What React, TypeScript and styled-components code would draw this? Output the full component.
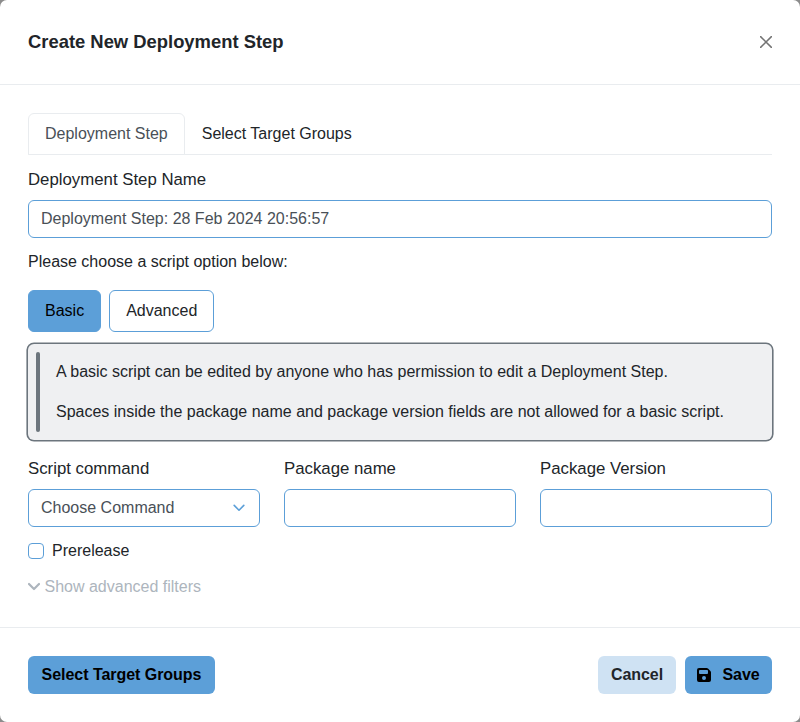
import React from "react";
import styled, { createGlobalStyle } from "styled-components";

const GlobalStyle = createGlobalStyle`
  *, *::before, *::after { box-sizing: border-box; }
  body {
    margin: 0;
    background: #8c8c8c;
    color: #212529;
    font: 16px/24px "Liberation Sans", Arial, sans-serif;
  }
  button, input { font: inherit; }
`;

const Modal = styled.div`
  display: flex;
  flex-direction: column;
  height: 722px;
  background: #fff;
  border-radius: 7px;
`;

const Header = styled.header`
  display: flex;
  align-items: center;
  justify-content: space-between;
  height: 85px;
  padding: 0 28px;
  border-bottom: 1px solid #e9ecef;
`;

const Title = styled.h5`
  margin: 0;
  font-size: 18.4px;
  font-weight: 700;
`;

const CloseButton = styled.button`
  display: flex;
  padding: 0;
  border: 0;
  background: none;
  color: #747474;
`;

const Body = styled.main`
  flex: 1;
  padding: 28px 28px 0;
`;

const Tabs = styled.nav`
  display: flex;
  height: 42px;
  border-bottom: 1px solid #e9ecef;
`;

const Tab = styled.button<{ $active?: boolean }>`
  height: 42px;
  padding: 0 16px;
  border: 1px solid ${(p) => (p.$active ? "#e9ecef" : "transparent")};
  border-bottom-color: ${(p) => (p.$active ? "#fff" : "transparent")};
  border-bottom-color: #e9ecef;
  border-radius: 6px 6px 0 0;
  background: ${(p) => (p.$active ? "#fff" : "none")};
  color: ${(p) => (p.$active ? "#495057" : "#212529")};
`;

const Field = styled.div`
  display: flex;
  flex-direction: column;
  gap: 8px;
`;

const FieldLabel = styled.label`
  font-size: 16.8px;
`;

const NameField = styled(Field)`
  margin-top: 13px;
`;

const TextInput = styled.input`
  width: 100%;
  height: 38px;
  padding: 0 12px;
  border: 1px solid #5c9fd8;
  border-radius: 6px;
  background: #fff;
  color: #495057;
  outline: 0;
`;

const Select = styled.div`
  display: flex;
  align-items: center;
  justify-content: space-between;
  height: 38px;
  padding: 0 13px 0 12px;
  border: 1px solid #5c9fd8;
  border-radius: 6px;
  color: #495057;
`;

const Prompt = styled.p`
  margin: 12px 0 16px;
`;

const ToggleGroup = styled.div`
  display: flex;
  gap: 8px;
`;

const Toggle = styled.button<{ $active?: boolean }>`
  height: 42px;
  padding: 0 16px;
  border: 1px solid #5c9fd8;
  border-radius: 6px;
  background: ${(p) => (p.$active ? "#5c9fd8" : "#fff")};
  color: ${(p) => (p.$active ? "#000" : "#212529")};
`;

const Callout = styled.div`
  display: flex;
  gap: 16px;
  margin-top: 12px;
  padding: 8px;
  border-radius: 6px;
  background: #eff0f2;
  box-shadow: 0 0 0 1.6px #6c757d;
`;

const CalloutBar = styled.span`
  width: 4px;
  border-radius: 2px;
  background: #6c757d;
`;

const CalloutText = styled.div`
  display: flex;
  flex-direction: column;
  gap: 16px;
  padding: 8px 0;
  p { margin: 0; }
`;

const FieldRow = styled.div`
  display: grid;
  grid-template-columns: repeat(3, 1fr);
  gap: 24px;
  margin-top: 17px;
`;

const CheckLabel = styled.label`
  display: flex;
  align-items: center;
  gap: 8px;
  margin-top: 12px;
`;

const Checkbox = styled.input`
  appearance: none;
  width: 16px;
  height: 16px;
  margin: 0;
  border: 1px solid #5c9fd8;
  border-radius: 4px;
`;

const FilterLink = styled.a`
  display: flex;
  align-items: center;
  gap: 4.5px;
  margin-top: 12px;
  color: #adb5bd;
`;

const Footer = styled.footer`
  display: flex;
  align-items: flex-start;
  height: 95px;
  padding: 28px;
  border-top: 1px solid #e9ecef;
`;

const ActionButton = styled.button<{ $soft?: boolean; $width: number }>`
  display: flex;
  align-items: center;
  justify-content: center;
  width: ${(p) => p.$width}px;
  height: 38px;
  padding: 0;
  border: 0;
  border-radius: 6px;
  background: ${(p) => (p.$soft ? "#cfe2f3" : "#5c9fd8")};
  color: ${(p) => (p.$soft ? "#212529" : "#000")};
  font-weight: 700;
  letter-spacing: -0.04px;
  white-space: nowrap;
  svg { margin-right: 11px; }
`;

const Actions = styled.div`
  display: flex;
  gap: 9px;
  margin-left: auto;
`;

const CloseIcon = () => (
  <svg width="12" height="12" viewBox="0 0 12 12" fill="none" stroke="currentColor" strokeWidth="1.5" strokeLinecap="round">
    <path d="M.6.6l10.8 10.8M11.4.6L.6 11.4" />
  </svg>
);

const SelectChevron = () => (
  <svg width="14" height="12" viewBox="0 0 14 12" fill="none" stroke="#5c9fd8" strokeWidth="1.6" strokeLinecap="round" strokeLinejoin="round">
    <path d="M2.2 3.4l4.8 4.8L11.8 3.4" />
  </svg>
);

const FilterChevron = () => (
  <svg width="12" height="12" viewBox="0 0 12 12" fill="none" stroke="currentColor" strokeWidth="2.2" strokeLinecap="round" strokeLinejoin="round">
    <path d="M1 3l5 5 5-5" />
  </svg>
);

const SaveIcon = () => (
  <svg width="14" height="14" viewBox="0 0 14 14" fill="currentColor">
    <path fillRule="evenodd" d="M2 0h7.600a2 2 0 0 1 1.400.6L13.400 3a2 2 0 0 1 .6 1.400V12a2 2 0 0 1-2 2H2a2 2 0 0 1-2-2V2a2 2 0 0 1 2-2zM2 2.900v2.200a.9.9 0 0 0 .9.9h7.200a.9.9 0 0 0 .9-.9V2.900a.9.9 0 0 0-.9-.9H2.900a.9.9 0 0 0-.9.9zM7 8a2 2 0 1 0 0 4 2 2 0 0 0 0-4z" />
  </svg>
);

export default function App() {
  return (
    <>
      <GlobalStyle />
      <Modal role="dialog">
        <Header>
          <Title>Create New Deployment Step</Title>
          <CloseButton aria-label="Close"><CloseIcon /></CloseButton>
        </Header>
        <Body>
          <Tabs>
            <Tab $active>Deployment Step</Tab>
            <Tab>Select Target Groups</Tab>
          </Tabs>
          <NameField>
            <FieldLabel htmlFor="step-name">Deployment Step Name</FieldLabel>
            <TextInput id="step-name" defaultValue="Deployment Step: 28 Feb 2024 20:56:57" />
          </NameField>
          <Prompt>Please choose a script option below:</Prompt>
          <ToggleGroup>
            <Toggle $active>Basic</Toggle>
            <Toggle>Advanced</Toggle>
          </ToggleGroup>
          <Callout>
            <CalloutBar />
            <CalloutText>
              <p>A basic script can be edited by anyone who has permission to edit a Deployment Step.</p>
              <p>Spaces inside the package name and package version fields are not allowed for a basic script.</p>
            </CalloutText>
          </Callout>
          <FieldRow>
            <Field>
              <FieldLabel>Script command</FieldLabel>
              <Select>Choose Command<SelectChevron /></Select>
            </Field>
            <Field>
              <FieldLabel htmlFor="package-name">Package name</FieldLabel>
              <TextInput id="package-name" />
            </Field>
            <Field>
              <FieldLabel htmlFor="package-version">Package Version</FieldLabel>
              <TextInput id="package-version" />
            </Field>
          </FieldRow>
          <CheckLabel><Checkbox type="checkbox" />Prerelease</CheckLabel>
          <FilterLink><FilterChevron />Show advanced filters</FilterLink>
        </Body>
        <Footer>
          <ActionButton $width={187}>Select Target Groups</ActionButton>
          <Actions>
            <ActionButton $soft $width={78}>Cancel</ActionButton>
            <ActionButton $width={87}><SaveIcon />Save</ActionButton>
          </Actions>
        </Footer>
      </Modal>
    </>
  );
}
